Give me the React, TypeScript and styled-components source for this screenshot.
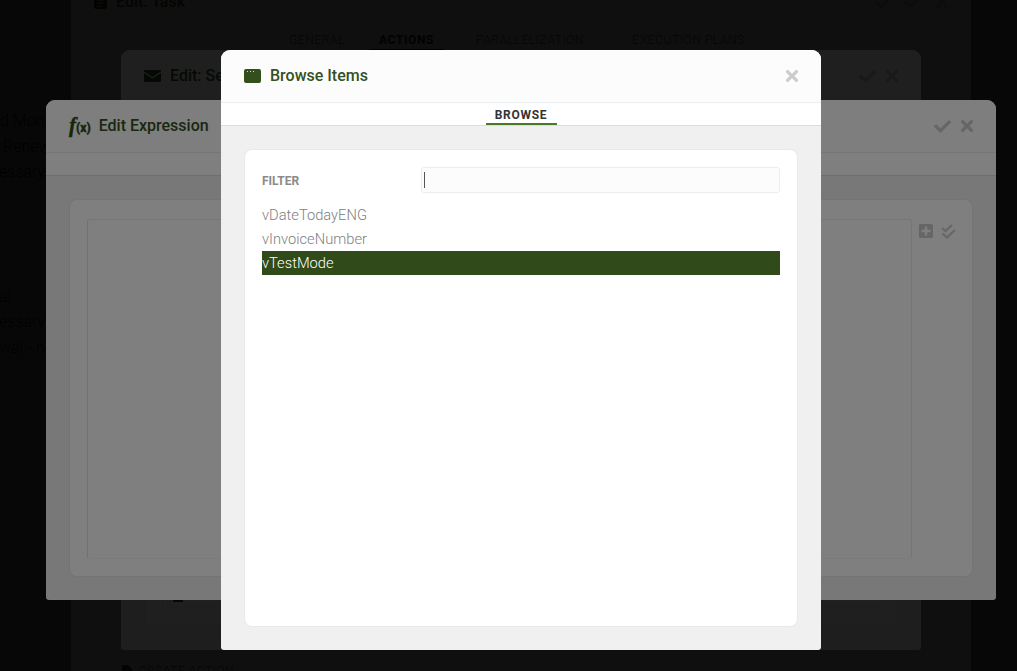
import React from "react";
import styled, { createGlobalStyle } from "styled-components";
import { FaCheck, FaTimes, FaPlusSquare } from "react-icons/fa";

const Global = createGlobalStyle`
  html, body { margin: 0; padding: 0; height: 100%; overflow: hidden; background: #fff; }
  body { font-family: Roboto, "Liberation Sans", sans-serif; }
  #root { height: 100%; }
`;

const Screen = styled.div`
  position: relative;
  width: 1017px;
  height: 671px;
  overflow: hidden;
  background: #fff;
`;

const PageList = styled.div`
  display: flex;
  flex-direction: column;
  width: 70px;
  padding-top: 108px;
  overflow: hidden;
`;

const PageLine = styled.div<{ $indent?: number; $after?: number }>`
  height: 25.500px;
  line-height: 25.500px;
  font-size: 16px;
  font-weight: 300;
  color: #111;
  white-space: nowrap;
  margin-left: ${(p) => p.$indent ?? 0}px;
  margin-bottom: ${(p) => p.$after ?? 0}px;
`;

const Backdrop = styled.div`
  position: absolute;
  inset: 0;
  background: rgba(0, 0, 0, 0.5);
`;

const Modal = styled.section<{ $x: number; $y: number; $w: number; $h: number }>`
  position: absolute;
  left: ${(p) => p.$x}px;
  top: ${(p) => p.$y}px;
  width: ${(p) => p.$w}px;
  height: ${(p) => p.$h}px;
  display: flex;
  flex-direction: column;
  background: #f0f0f0;
  border-radius: 9px 9px 3px 3px;
  overflow: hidden;
`;

const TaskModal = styled(Modal)`
  background: #fff;
`;

const Header = styled.header`
  flex: none;
  height: 52px;
  box-sizing: content-box;
  display: flex;
  align-items: center;
  padding: 0 20px 0 23px;
  background: #fcfcfc;
  border-bottom: 1px solid #e9eeee;
`;

const Title = styled.h2`
  flex: 1;
  margin: 0;
  font-size: 16px;
  font-weight: 500;
  line-height: 20px;
  color: #33501e;
  white-space: nowrap;
`;

const HeaderIcon = styled.span<{ $gap: number }>`
  display: inline-flex;
  align-items: center;
  margin-right: ${(p) => p.$gap}px;
  color: #2f4a1a;
`;

const Actions = styled.div<{ $gap?: number }>`
  display: flex;
  align-items: center;
  gap: ${(p) => p.$gap ?? 7}px;
  color: #ccc;
  font-size: 17px;
  svg:last-child { font-size: 18px; }
`;

const FxGlyph = styled.span`
  display: inline-flex;
  align-items: baseline;
  color: #2f4a1a;
  line-height: 20px;
  font-weight: 700;
`;

const FxF = styled.span`
  font-family: "Liberation Serif", serif;
  font-style: italic;
  font-size: 21px;
  -webkit-text-stroke: 0.4px #2f4a1a;
`;

const FxX = styled.span`
  font-family: Roboto, sans-serif;
  font-size: 12px;
  font-weight: 900;
  -webkit-text-stroke: 0.3px #2f4a1a;
`;

const TabBar = styled.nav`
  flex: none;
  height: 22px;
  display: flex;
  justify-content: center;
  background: #fff;
  border-bottom: 1px solid #ddd;
`;

const Tab = styled.div`
  height: 22px;
  box-sizing: border-box;
  padding: 4px 8px 0;
  min-width: 71px;
  text-align: center;
  font-size: 12px;
  line-height: 16px;
  font-weight: 700;
  letter-spacing: 0.7px;
  color: #333;
  border-bottom: 2px solid #4a7a28;
`;

const TaskTabs = styled.nav`
  display: flex;
  height: 22px;
  padding-left: 208px;
`;

const TaskTab = styled.div<{ $on?: boolean; $left: number }>`
  margin-left: ${(p) => p.$left}px;
  padding: 3px 10px 0;
  font-size: 12px;
  line-height: 16px;
  letter-spacing: 0.6px;
  font-weight: ${(p) => (p.$on ? 700 : 300)};
  color: ${(p) => (p.$on ? "#111" : "#555")};
  border-bottom: 2px solid ${(p) => (p.$on ? "#111" : "transparent")};
`;

const CreateAction = styled.div`
  display: flex;
  align-items: center;
  gap: 7px;
  margin: 612px 0 0 51px;
  font-size: 12px;
  letter-spacing: 0.55px;
  font-weight: 300;
  color: #555;
  line-height: 16px;
`;

const Body = styled.div`
  flex: 1;
  min-height: 0;
  display: flex;
  padding: 24px;
`;

const Card = styled.div`
  flex: 1;
  min-width: 0;
  box-sizing: border-box;
  background: #fff;
  box-shadow: 0 0 0 1px #e9e9e9;
  border-radius: 7px;
`;

const SendCard = styled(Card)`
  display: flex;
  align-items: flex-end;
  padding: 0 17px 18px;
`;

const SendRow = styled.div`
  flex: 1;
  height: 80px;
  display: flex;
  align-items: flex-end;
  gap: 9px;
  padding: 0 10px 5px;
  border-left: 1px solid #e4e4e4;
  border-bottom: 1px solid #e8e8e8;
  font-size: 13px;
  line-height: 16px;
  color: #333;
`;

const ExprCard = styled(Card)`
  display: flex;
  padding: 19px 17px 17px;
  gap: 6px;
`;

const Editor = styled.div`
  flex: none;
  width: 825px;
  box-sizing: border-box;
  border: 1px solid #ececec;
  border-left-color: #e2e2e2;
  border-bottom-color: #f6f6f6;
  border-radius: 3px;
`;

const Tools = styled.div`
  display: flex;
  gap: 7px;
  height: 24px;
  align-items: center;
  color: #ccc;
  font-size: 16px;
`;

const BrowseCard = styled(Card)`
  padding: 17px;
  display: flex;
  flex-direction: column;
`;

const FilterRow = styled.div`
  display: flex;
  align-items: center;
  height: 26px;
  margin-bottom: 10px;
`;

const FilterLabel = styled.label`
  width: 159px;
  margin-top: 2px;
  font-size: 12px;
  font-weight: 700;
  color: #8a8a8a;
`;

const FilterBox = styled.div`
  flex: 1;
  height: 26px;
  box-sizing: border-box;
  display: flex;
  align-items: center;
  padding-left: 2px;
  background: #fcfcfc;
  border: 1px solid #ededed;
  border-radius: 3px;
`;

const Caret = styled.span`
  display: block;
  width: 1px;
  height: 16px;
  background: #555;
`;

const Item = styled.div<{ $selected?: boolean }>`
  height: 24px;
  line-height: 24px;
  font-size: 14.700px;
  font-weight: 300;
  color: ${(p) => (p.$selected ? "#fff" : "#808080")};
  background: ${(p) => (p.$selected ? "#304a1a" : "transparent")};
`;

const WindowIcon = () => (
  <svg width="17" height="14" viewBox="0 0 17 14" aria-hidden="true">
    <rect width="17" height="14" rx="2" fill="#33501c" />
    <rect x="3" y="2" width="1" height="1" fill="#d8e0d0" />
    <rect x="6" y="2" width="1" height="1" fill="#d8e0d0" />
    <rect x="9" y="2" width="1" height="1" fill="#d8e0d0" />
  </svg>
);

const MailIcon = () => (
  <svg width="17" height="12" viewBox="0 0 17 12" aria-hidden="true">
    <path d="M1.200 0h14.600c.7 0 1.200.5 1.200 1.100v.4L8.500 7 0 1.500v-.4C0 .5.500 0 1.200 0z" fill="#2f4a1a" />
    <path d="M0 3l8.500 5.400L17 3v7.800c0 .7-.5 1.200-1.200 1.200H1.200C.5 12 0 11.500 0 10.800z" fill="#2f4a1a" />
  </svg>
);

const TaskIcon = () => (
  <svg width="13" height="14" viewBox="0 0 13 14" aria-hidden="true">
    <rect width="13" height="14" rx="2" fill="#2f4a1a" />
    <path d="M3 5h7M3 8h7M3 11h5" stroke="#fff" strokeWidth="1" />
  </svg>
);

const FileIcon = () => (
  <svg width="10" height="12" viewBox="0 0 10 12" aria-hidden="true">
    <path d="M0 0h6l4 4v8H0z" fill="#333" />
  </svg>
);

const DoubleCheck = () => (
  <svg width="15" height="15" viewBox="0 0 15 15" aria-hidden="true">
    <path d="M1 4l3.500 3L11 1M1.500 9.500l4.500 4L14 6" fill="none" stroke="currentColor" strokeWidth="2.200" />
  </svg>
);

export default function App() {
  return (
    <Screen>
      <Global />
      <PageList>
        <PageLine>d Moni</PageLine>
        <PageLine $indent={3}>Renew</PageLine>
        <PageLine $after={99} $indent={-1}>essary?</PageLine>
        <PageLine $indent={-1}>al</PageLine>
        <PageLine $indent={-1}>essary?</PageLine>
        <PageLine $indent={-1}>wal - ne</PageLine>
      </PageList>

      <Backdrop />
      <TaskModal $x={71} $y={-24} $w={900} $h={720}>
        <Header>
          <HeaderIcon $gap={9}><TaskIcon /></HeaderIcon>
          <Title>Edit: Task</Title>
          <Actions $gap={12}>
            <FaCheck />
            <FaCheck />
            <FaTimes />
          </Actions>
        </Header>
        <TaskTabs>
          <TaskTab $left={0}>GENERAL</TaskTab>
          <TaskTab $left={14} $on>ACTIONS</TaskTab>
          <TaskTab $left={22}>PARALLELIZATION</TaskTab>
          <TaskTab $left={28}>EXECUTION PLANS</TaskTab>
        </TaskTabs>
        <CreateAction><FileIcon />CREATE ACTION</CreateAction>
      </TaskModal>

      <Backdrop />
      <Modal $x={121} $y={50} $w={800} $h={600}>
        <Header>
          <HeaderIcon $gap={9}><MailIcon /></HeaderIcon>
          <Title>Edit: Send Email</Title>
          <Actions>
            <FaCheck />
            <FaTimes />
          </Actions>
        </Header>
        <TabBar />
        <Body>
          <SendCard>
            <SendRow><FileIcon />Order</SendRow>
          </SendCard>
        </Body>
      </Modal>

      <Backdrop />
      <Backdrop />
      <Modal $x={46} $y={100} $w={950} $h={500}>
        <Header>
          <HeaderIcon $gap={8}>
            <FxGlyph><FxF>f</FxF><FxX>(x)</FxX></FxGlyph>
          </HeaderIcon>
          <Title>Edit Expression</Title>
          <Actions>
            <FaCheck />
            <FaTimes />
          </Actions>
        </Header>
        <TabBar />
        <Body>
          <ExprCard>
            <Editor />
            <Tools>
              <FaPlusSquare />
              <DoubleCheck />
            </Tools>
          </ExprCard>
        </Body>
      </Modal>

      <Backdrop />
      <Modal $x={221} $y={50} $w={600} $h={600}>
        <Header>
          <HeaderIcon $gap={9}><WindowIcon /></HeaderIcon>
          <Title>Browse Items</Title>
          <Actions>
            <FaTimes />
          </Actions>
        </Header>
        <TabBar>
          <Tab>BROWSE</Tab>
        </TabBar>
        <Body>
          <BrowseCard>
            <FilterRow>
              <FilterLabel>FILTER</FilterLabel>
              <FilterBox><Caret /></FilterBox>
            </FilterRow>
            <Item>vDateTodayENG</Item>
            <Item>vInvoiceNumber</Item>
            <Item $selected>vTestMode</Item>
          </BrowseCard>
        </Body>
      </Modal>
    </Screen>
  );
}
